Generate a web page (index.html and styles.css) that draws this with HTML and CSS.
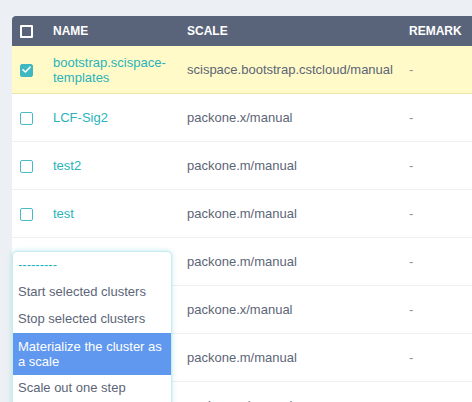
FILE: index.html
```html
<!DOCTYPE html>
<html>
<head>
<meta charset="utf-8">
<link rel="stylesheet" href="styles.css">
</head>
<body>
<div class="page">
  <table class="grid">
    <colgroup>
      <col class="c-check"><col class="c-name"><col class="c-scale"><col class="c-remark">
    </colgroup>
    <thead>
      <tr>
        <th class="cb-cell"><span class="cb cb-head"></span></th>
        <th>NAME</th>
        <th>SCALE</th>
        <th>REMARK</th>
      </tr>
    </thead>
    <tbody>
      <tr class="selected">
        <td class="cb-cell"><span class="cb cb-on"><svg viewBox="0 0 13 13" width="13" height="13"><path d="M3 6.8 L5.4 9 L10 4.2" fill="none" stroke="#fff" stroke-width="1.6" stroke-linecap="round" stroke-linejoin="round"/></svg></span></td>
        <td class="name">bootstrap.scispace-templates</td>
        <td class="scale">scispace.bootstrap.cstcloud/manual</td>
        <td class="remark">-</td>
      </tr>
      <tr>
        <td class="cb-cell"><span class="cb"></span></td>
        <td class="name">LCF-Sig2</td>
        <td class="scale">packone.x/manual</td>
        <td class="remark">-</td>
      </tr>
      <tr>
        <td class="cb-cell"><span class="cb"></span></td>
        <td class="name">test2</td>
        <td class="scale">packone.m/manual</td>
        <td class="remark">-</td>
      </tr>
      <tr>
        <td class="cb-cell"><span class="cb"></span></td>
        <td class="name">test</td>
        <td class="scale">packone.m/manual</td>
        <td class="remark">-</td>
      </tr>
      <tr>
        <td class="cb-cell"><span class="cb"></span></td>
        <td class="name">test3</td>
        <td class="scale">packone.m/manual</td>
        <td class="remark">-</td>
      </tr>
      <tr>
        <td class="cb-cell"><span class="cb"></span></td>
        <td class="name">test4</td>
        <td class="scale">packone.x/manual</td>
        <td class="remark">-</td>
      </tr>
      <tr>
        <td class="cb-cell"><span class="cb"></span></td>
        <td class="name">test5</td>
        <td class="scale">packone.m/manual</td>
        <td class="remark">-</td>
      </tr>
      <tr>
        <td class="cb-cell"><span class="cb"></span></td>
        <td class="name">test6</td>
        <td class="scale">packone.x/manual</td>
        <td class="remark">-</td>
      </tr>
    </tbody>
  </table>

  <ul class="menu">
    <li class="sep">---------</li>
    <li>Start selected clusters</li>
    <li>Stop selected clusters</li>
    <li class="active">Materialize the cluster as a scale</li>
    <li>Scale out one step</li>
    <li>Scale in one step</li>
  </ul>
</div>
</body>
</html>
```

FILE: styles.css
```css
html, body {
  margin: 0;
  padding: 0;
  background: #ecf0f4;
  overflow: hidden;
  width: 472px;
  height: 402px;
}
body {
  font-family: "Liberation Sans", Arial, sans-serif;
  font-size: 13px;
  color: #5c6577;
}
.page {
  position: relative;
  padding: 16px 0 0 12px;
}
.grid {
  border-collapse: separate;
  border-spacing: 0;
  table-layout: fixed;
  width: 520px;
  background: #fff;
}
.c-check { width: 33px; }
.c-name { width: 134px; }
.c-scale { width: 222px; }
.c-remark { width: 131px; }

thead th {
  background: #59647a;
  color: #fff;
  font-weight: bold;
  font-size: 12px;
  text-align: left;
  height: 30px;
  padding: 0 8px;
  box-sizing: border-box;
  vertical-align: middle;
}
thead th:first-child { border-top-left-radius: 4px; }

tbody td {
  height: 48px;
  padding: 0 8px;
  box-sizing: border-box;
  border-bottom: 1px solid #eef0f3;
  vertical-align: middle;
  line-height: 15px;
}
tbody tr.selected td {
  background: #fffac8;
  border-bottom-color: #ece5ad;
}
.cb-cell { padding-right: 0 !important; }
.cb {
  display: block;
  width: 13px;
  height: 13px;
  box-sizing: border-box;
  border: 1.5px solid #48bcc4;
  border-radius: 2px;
  background: #fff;
  margin-top: 1px;
}
.cb-head {
  border: 2px solid #fff;
  background: transparent;
  width: 13px;
  height: 13px;
  border-radius: 1px;
  margin-top: 0;
}
.cb-on {
  background: #40b8c2;
  border-color: #40b8c2;
  position: relative;
}
.cb-on svg {
  display: block;
  margin: -1.5px 0 0 -1.5px;
}
.name { color: #2ab3bb; }
.scale { color: #5c6577; }
.remark { color: #8a92a0; }

.menu {
  position: absolute;
  left: 12px;
  top: 251px;
  width: 160px;
  margin: 0;
  padding: 0;
  list-style: none;
  background: #fff;
  border: 1px solid #c6ecef;
  border-radius: 5px;
  box-sizing: border-box;
  box-shadow: 0 0 5px rgba(64, 190, 200, 0.35);
  overflow: hidden;
}
.menu li {
  padding: 5px 5px 7px;
  line-height: 15px;
  color: #5c6577;
}
.menu li.sep {
  color: #22b4be;
}
.menu li.active {
  padding: 6px 5px;
  background: #5f98ee;
  color: #fff;
}
```
